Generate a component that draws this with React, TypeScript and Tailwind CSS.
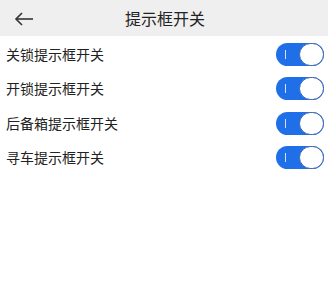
import React from "react";

const items = ["关锁提示框开关", "开锁提示框开关", "后备箱提示框开关", "寻车提示框开关"];

function Toggle() {
  return (
    <div className="relative w-[48px] h-[23px] rounded-full bg-[#1f6fe8]">
      <div className="absolute left-[9px] top-[7px] w-[1px] h-[9px] bg-white/80" />
      <div className="absolute right-0 top-0 w-[25px] h-[23px] rounded-full bg-white border-[1.5px] border-[#3a64b0]" />
    </div>
  );
}

function App() {
  const [on] = React.useState(items.map(() => true));

  return (
    <div className="w-[328px] h-[301px] bg-white" style={{ fontFamily: '"Noto Sans CJK SC", "Noto Sans", sans-serif' }}>
      <div className="h-[36px] bg-[#efefef] flex items-center relative">
        <svg className="absolute left-[14px] top-[12px]" width="20" height="14" viewBox="0 0 20 14" fill="none" stroke="#333" strokeWidth="1.6">
          <path d="M19 7H2" />
          <path d="M8 1L2 7l6 6" />
        </svg>
        <div className="flex-1 text-center text-[16px] text-[#222] pl-[2px]">提示框开关</div>
      </div>

      <div className="flex flex-col pt-[1px]">
        {items.map((label, i) => (
          <div key={label} className="h-[34.5px] flex items-center justify-between pl-[6px] pr-[4px]">
            <span className="text-[14px] text-[#222]">{label}</span>
            {on[i] && <Toggle />}
          </div>
        ))}
      </div>
    </div>
  );
}

export default App;
